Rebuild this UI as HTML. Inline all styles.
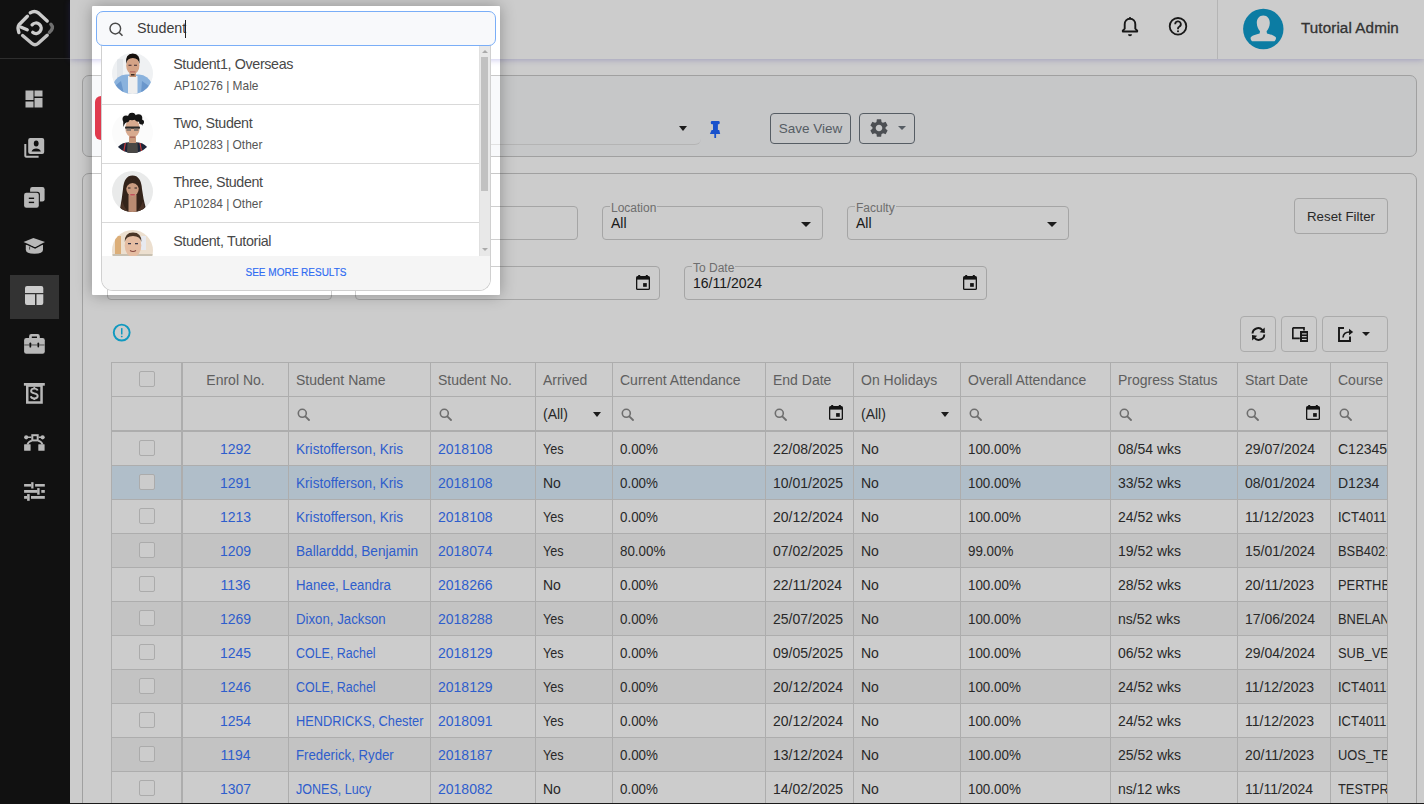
<!DOCTYPE html>
<html><head><meta charset="utf-8">
<style>
*{box-sizing:border-box;margin:0;padding:0}
html,body{width:1424px;height:804px;overflow:hidden;background:#fff;font-family:"Liberation Sans",sans-serif;color:#333}
.abs{position:absolute}
#side{position:absolute;left:0;top:0;width:70px;height:804px;background:#161616}
#side .dv{position:absolute;left:0;top:58px;width:70px;height:1px;background:#3a3a3a}
#side .ic{position:absolute;left:22px;width:24px;height:24px}
#side .act{position:absolute;left:10px;top:275px;width:49px;height:44px;background:#404040}
#hdr{position:absolute;left:70px;top:0;width:1354px;height:59px;background:#fff;box-shadow:0 1px 6px rgba(70,60,190,.28)}
#hdr .vd{position:absolute;left:1147px;top:0;width:1px;height:59px;background:#e3e3e3}
.card{position:absolute;left:82px;width:1335px;border:1px solid #c9c9c9;border-radius:7px;background:#fff}
.btn{position:absolute;border:1px solid #6c757d;border-radius:4px;color:#6c757d;font-size:13.5px;display:flex;align-items:center;justify-content:center}
.inp{position:absolute;border:1px solid #cfcfcf;border-radius:4px;height:34px}
.inp .lg{position:absolute;left:7px;top:-6px;font-size:12px;color:#8a8a8a;background:#fff;padding:0 1px;line-height:14px}
.inp .vl{position:absolute;left:8px;top:8px;font-size:14px;color:#222}
.caret{position:absolute;width:0;height:0;border-left:5px solid transparent;border-right:5px solid transparent;border-top:5px solid #222}
.tbtn{position:absolute;top:316px;height:36px;border:1px solid #d6d6d6;border-radius:4px;background:#fff}
#tbl{position:absolute;left:111px;top:362px;width:1277px;height:442px;border-left:1px solid #d9d9d9;border-top:1px solid #d9d9d9;overflow:hidden;background:#fff}
.c{position:absolute;border-right:1px solid #d9d9d9;border-bottom:1px solid #d9d9d9;padding:0 7px;display:flex;align-items:center;white-space:nowrap;overflow:hidden;font-size:14px;color:#333}
.c.hd{color:#777}
.c.ctr{justify-content:center}
.c.c0{border-right:2px solid #d9d9d9}
.c.lnk{color:#3a76ff}
.c.fl{border-bottom:2px solid #d9d9d9}
.c.alt{background:#f4f4f4}
.c.sel{background:#ddeefc}
.cb{position:absolute;left:27px;top:8px;width:16px;height:16px;border:1px solid #d6d6d6;border-radius:2px;background:#fff}
.c .mag{position:absolute;left:8px;top:11px}
.c .cal{position:absolute;right:10px;top:8px}
.c .all{position:absolute;left:7px;top:9px}
.c .caret{right:11px;top:15px;border-width:5px 4.5px 0 4.5px}
#cut{position:absolute;left:92px;top:6px;width:408px;height:289px;border-radius:1px;box-shadow:0 0 16px rgba(0,0,0,.3),0 0 0 3000px rgba(0,0,0,.2);z-index:10}
#pop{position:absolute;left:0;top:0;z-index:11}
#srch{position:absolute;left:96px;top:11px;width:400px;height:35px;border:1.3px solid #7aaef7;border-radius:7px;background:#f8f9fb;z-index:2}
#srch .tx{position:absolute;left:40px;top:8px;font-size:14.3px;color:#3c3c3c;line-height:17px}
#srch .cur{position:absolute;left:88px;top:8px;width:1px;height:18px;background:#222}
#list{position:absolute;left:101px;top:45px;width:390px;height:246px;border:1px solid #d0d0d0;border-top:none;border-radius:0 0 12px 12px;background:#fff;overflow:hidden}
.it{position:absolute;left:0;width:377px;height:59px;border-bottom:1px solid #d9d9d9}
.it .nm{position:absolute;left:71.2px;top:9.8px;font-size:14.3px;letter-spacing:-0.36px;color:#484848;line-height:16px}
.it .sb{position:absolute;left:72px;top:33.3px;font-size:11.9px;color:#555;line-height:14px}
.it .av{position:absolute;left:10px;top:7px;width:41px;height:41px;border-radius:50%;overflow:hidden}
#sbar{position:absolute;left:377px;top:0;width:11px;height:211px;background:#e8e8e8;border-left:1px solid #e0e0e0}
#thumb{position:absolute;left:1px;top:12px;width:7px;height:134px;background:#c1c1c1}
#foot{position:absolute;left:0;top:211px;width:388px;height:34px;background:#f5f5f5;font-size:10px;color:#2f6cf2;text-align:center;line-height:33px;-webkit-text-stroke:.15px #2f6cf2}
</style></head><body>

<div id="side">
 <svg class="abs" style="left:0;top:0" width="70" height="58" viewBox="0 0 70 58">
  <g fill="none" stroke="#ffffff" stroke-width="3.4" stroke-linecap="round" stroke-linejoin="round">
   <path d="M30.3 12.8 Q34.5 10.2 38.5 13 L47.2 21"/>
   <path d="M27.4 16.3 L19 24.8 Q17.2 27 18.9 32.6"/>
   <path d="M21.2 27.2 L27.2 29.8"/>
   <path d="M32.1 24.8 A5.2 5.2 0 1 1 32.8 32.4"/>
   <path d="M22.6 35.5 L32 43.5 Q35 46 38 43.5 L47.2 35.2" stroke="#f4f4f4"/>
  </g>
  <path d="M50.9 24.3 Q54.5 28 49.5 32.3" stroke="#8c8c8c" stroke-width="3.4" fill="none" stroke-linecap="round"/>
 </svg>
 <div class="dv"></div>
 <div class="act"></div>
 <!-- dashboard -->
 <svg class="ic" style="top:87px" viewBox="0 0 24 24"><path fill="#e6e6e6" d="M3.5 13h8V3.5h-8zM3.5 20.5h8V14.5h-8zM12.5 20.5h8V11h-8zM12.5 3.5v6h8v-6z"/></svg>
 <!-- contacts -->
 <svg class="ic" style="top:136px" viewBox="0 0 24 24"><path fill="#e6e6e6" d="M4.3 8H2.3v11.8c0 1.1.9 2 2 2h12.3v-2H4.3z"/><rect x="6.2" y="2" width="16" height="16" rx="2" fill="#e6e6e6"/><ellipse cx="14.2" cy="7.5" rx="2.4" ry="2.9" fill="#161616"/><path d="M9.6 15.6c.4-2 2.4-3.2 4.6-3.2s4.2 1.2 4.6 3.2z" fill="#161616"/></svg>
 <!-- copies -->
 <svg class="ic" style="top:185px" viewBox="0 0 24 24"><rect x="8.1" y="2" width="14.5" height="14.4" rx="2.2" fill="#e6e6e6"/><rect x="1" y="6.7" width="16.9" height="17" rx="2.6" fill="#161616"/><rect x="2.1" y="7.8" width="14.7" height="14.9" rx="2.2" fill="#e6e6e6"/><rect x="6.8" y="12.6" width="5.3" height="1.4" fill="#161616"/><rect x="6.8" y="16.7" width="5.3" height="1.4" fill="#161616"/></svg>
 <!-- school -->
 <svg class="ic" style="top:234px" viewBox="0 0 24 24"><path d="M3.8 10.8V15.8Q3.8 19.8 12.5 19.8Q21 19.8 21 15.8V10.8z" fill="#e6e6e6"/><path d="M1.6 8.6L13.1 13.9L23 8.6" fill="none" stroke="#161616" stroke-width="1.3"/><path d="M1.5 8L11.4 3.9L23 8L13.1 12.9z" fill="#e6e6e6"/><rect x="7" y="12.5" width="1.1" height="3.1" fill="#6a6a6a"/></svg>
 <!-- layout active -->
 <svg class="ic" style="top:284px" viewBox="0 0 24 24"><path fill="#ffffff" d="M5 2h14.3a2 2 0 0 1 2 2v5H3V4a2 2 0 0 1 2-2zM3 10.3h10V21H5a2 2 0 0 1-2-2zM14.5 10.3H21.3V19a2 2 0 0 1-2 2h-4.8z"/></svg>
 <!-- briefcase -->
 <svg class="ic" style="top:332px" viewBox="0 0 24 24"><path d="M9.3 2h6.3a2.2 2.2 0 0 1 2.2 2.2V7H15V4.6H9.8V7H7.1V4.2A2.2 2.2 0 0 1 9.3 2z" fill="#e6e6e6"/><rect x="2.1" y="6.1" width="20.7" height="15.7" rx="2.2" fill="#e6e6e6"/><rect x="2.1" y="12.1" width="20.7" height="1.7" fill="#9a9a9a"/><rect x="7.5" y="10.4" width="1.7" height="5.1" rx=".85" fill="#161616"/><rect x="15.5" y="10.4" width="1.6" height="5.1" rx=".8" fill="#161616"/></svg>
 <!-- dollar doc -->
 <svg class="ic" style="top:381px" viewBox="0 0 24 24"><rect x="1.9" y="2" width="20.9" height="2.7" fill="#e6e6e6"/><rect x="5.25" y="4.6" width="14.3" height="16.9" fill="none" stroke="#e6e6e6" stroke-width="2.5"/><path d="M15.6 9.4C15.3 8.2 14 7.6 12.3 7.6C10.3 7.6 9.1 8.6 9.1 10C9.1 11.5 10.5 12 12.3 12.4C14.3 12.8 15.7 13.4 15.7 15C15.7 16.5 14.3 17.4 12.3 17.4C10.4 17.4 9.1 16.7 8.8 15.3M12.3 6V7.6M12.3 17.4V19" fill="none" stroke="#e6e6e6" stroke-width="1.9"/></svg>
 <!-- network -->
 <svg class="ic" style="top:430px" viewBox="0 0 24 24"><g fill="#e6e6e6"><circle cx="4.2" cy="7.3" r="2.1"/><circle cx="20.6" cy="7.3" r="2.1"/><rect x="2.1" y="14.2" width="6.5" height="6.5" rx=".5"/><rect x="16.3" y="14.2" width="6.3" height="6.5" rx=".5"/></g><g fill="none" stroke="#e6e6e6"><rect x="10.3" y="5.2" width="5.4" height="5.2" stroke-width="2"/><path d="M4.2 7.3H9.3M16.7 7.3H20.6" stroke-width="1.5"/><path d="M9.8 10.6Q6.3 11.6 5.4 14.5M16.2 10.6Q19.7 11.6 20.5 14.5" stroke-width="1.8"/></g></svg>
 <!-- tune -->
 <svg class="ic" style="top:479px" viewBox="0 0 24 24"><g fill="#e6e6e6"><rect x="2.1" y="5" width="7.1" height="2.6"/><rect x="9.2" y="3.2" width="2.3" height="6.3"/><rect x="13.1" y="5" width="9.7" height="2.6"/><rect x="2.1" y="11" width="13.4" height="2.8"/><rect x="15.2" y="9.1" width="2.4" height="6.6"/><rect x="19.3" y="11" width="3.5" height="2.8"/><rect x="2.1" y="17" width="3" height="2.8"/><rect x="5.1" y="15.1" width="2.6" height="6.7"/><rect x="9" y="17" width="13.8" height="2.8"/></g></svg>
</div>

<div id="hdr">
 <svg class="abs" style="left:1050px;top:16px" width="20" height="21" viewBox="0 0 20 21"><path d="M10 2.7c-3.2 0-5.3 2.4-5.3 5.6v4.4L2.8 14.6v.9h14.4v-.9l-1.9-1.9V8.3c0-3.2-2.1-5.6-5.3-5.6z" fill="none" stroke="#1e1e1e" stroke-width="1.9" stroke-linejoin="round"/><path d="M8 18.3a2 2 0 0 0 4 0" fill="#1e1e1e"/><rect x="9.2" y="1" width="1.6" height="2" fill="#1e1e1e"/></svg>
 <svg class="abs" style="left:1097.5px;top:17px" width="20" height="20" viewBox="0 0 20 20"><circle cx="10" cy="9.3" r="8.3" fill="none" stroke="#1e1e1e" stroke-width="1.8"/><path d="M7.2 7.2a2.8 2.8 0 1 1 4 2.5c-.8.4-1.2.9-1.2 1.8v.7" fill="none" stroke="#1e1e1e" stroke-width="1.8"/><circle cx="10" cy="14.3" r="1" fill="#1e1e1e"/></svg>
 <div class="vd"></div>
 <svg class="abs" style="left:1173px;top:8px" width="41" height="42" viewBox="0 0 41 42"><circle cx="20.3" cy="21" r="20.2" fill="#109bcc"/><path d="M20.3 7.5C16.2 7.5 13.8 10.8 13.8 15C13.8 18.5 15.5 21.6 17 23.3L16.6 25.5C13 26.3 9.8 27.3 8 29C7.2 30 7.6 32 9 33.3L31.5 33.3C33 32 33.4 30 32.6 29C30.8 27.3 27.6 26.3 24 25.5L23.6 23.3C25.1 21.6 26.8 18.5 26.8 15C26.8 10.8 24.4 7.5 20.3 7.5z" fill="#fff"/></svg>
 <div class="abs" style="left:1231px;top:19px;font-size:15.2px;color:#404040;-webkit-text-stroke:.3px #404040;letter-spacing:0.1px">Tutorial Admin</div>
</div>

<!-- card 1 -->
<div class="card" style="top:75px;height:82px;background:#f8f9fb"></div>
<div class="abs" style="left:95px;top:96px;width:60px;height:44px;border-radius:6px;background:#e03a4e"></div>
<div class="abs" style="left:160px;top:110px;width:541px;height:35px;border-bottom:1px solid #e2e2e2;border-radius:0 0 6px 0"></div>
<span class="caret" style="left:679px;top:126px;border-width:5px 4px 0 4px"></span>
<svg class="abs" style="left:708px;top:120px" width="14" height="18" viewBox="0 0 14 18"><g fill="#1f66ff"><rect x="2.8" y="1" width="8.9" height="3.3" rx="1.2"/><rect x="5" y="4" width="4.9" height="6.3"/><path d="M3.6 10.1H11.2L12.2 13.9H1.9z"/><rect x="6.3" y="13.5" width="1.8" height="4.5" rx=".6"/></g></svg>
<div class="btn" style="left:770px;top:113px;width:81px;height:31px">Save View</div>
<div class="btn" style="left:859px;top:113px;width:56px;height:31px">
 <svg class="abs" style="left:7.5px;top:3px" width="22" height="22" viewBox="0 0 24 24"><path fill="#5f6368" d="M19.14 12.94c.04-.3.06-.61.06-.94 0-.32-.02-.64-.07-.94l2.03-1.58a.49.49 0 0 0 .12-.61l-1.92-3.32a.49.49 0 0 0-.59-.22l-2.39.96c-.5-.38-1.03-.7-1.62-.94l-.36-2.54a.48.48 0 0 0-.48-.41h-3.84c-.24 0-.43.17-.47.41l-.36 2.54c-.59.24-1.13.57-1.62.94l-2.39-.96a.48.48 0 0 0-.59.22L2.74 8.87c-.12.21-.08.47.12.61l2.03 1.58c-.05.3-.09.63-.09.94s.02.64.07.94l-2.03 1.58a.49.49 0 0 0-.12.61l1.92 3.32c.12.22.37.29.59.22l2.39-.96c.5.38 1.03.7 1.62.94l.36 2.54c.05.24.24.41.48.41h3.84c.24 0 .44-.17.47-.41l.36-2.54c.59-.24 1.13-.56 1.62-.94l2.39.96c.22.08.47 0 .59-.22l1.92-3.32c.12-.22.07-.47-.12-.61l-2.01-1.58zM12 15.6c-1.98 0-3.6-1.62-3.6-3.6s1.62-3.6 3.6-3.6 3.6 1.62 3.6 3.6-1.62 3.6-3.6 3.6z"/></svg>
 <span class="caret" style="left:38px;top:11.5px;border-width:4px 4px 0 4px;border-top-color:#6c757d"></span>
</div>

<!-- card 2 -->
<div class="card" style="top:173px;height:700px"></div>
<div class="inp" style="left:354px;top:206px;width:224px"></div>
<div class="inp" style="left:602px;top:206px;width:221px"><span class="lg">Location</span><span class="vl">All</span><span class="caret" style="left:198px;top:15px;border-width:5px 5px 0 5px"></span></div>
<div class="inp" style="left:847px;top:206px;width:222px"><span class="lg">Faculty</span><span class="vl">All</span><span class="caret" style="left:199px;top:15px;border-width:5px 5px 0 5px"></span></div>
<div class="btn" style="left:1294px;top:198px;width:94px;height:36px;border-color:#cfcfcf;color:#333;font-size:13.3px">Reset Filter</div>
<div class="inp" style="left:107px;top:266px;width:225px"></div>
<div class="inp" style="left:355px;top:266px;width:305px"><svg class="abs" style="left:280px;top:8px" width="14" height="15" viewBox="0 0 14 15"><rect x="0" y="1" width="14" height="14" rx="1.6" fill="#1a1a1a"/><rect x="1.3" y="4.6" width="11.4" height="9.1" fill="#fff"/><rect x="7.1" y="8.1" width="3.7" height="3.7" fill="#1a1a1a"/><rect x="2.2" y="0" width="2" height="2" fill="#1a1a1a"/><rect x="9.8" y="0" width="2" height="2" fill="#1a1a1a"/></svg></div>
<div class="inp" style="left:684px;top:266px;width:303px"><span class="lg">To Date</span><span class="vl">16/11/2024</span><svg class="abs" style="left:278px;top:8px" width="14" height="15" viewBox="0 0 14 15"><rect x="0" y="1" width="14" height="14" rx="1.6" fill="#1a1a1a"/><rect x="1.3" y="4.6" width="11.4" height="9.1" fill="#fff"/><rect x="7.1" y="8.1" width="3.7" height="3.7" fill="#1a1a1a"/><rect x="2.2" y="0" width="2" height="2" fill="#1a1a1a"/><rect x="9.8" y="0" width="2" height="2" fill="#1a1a1a"/></svg></div>
<svg class="abs" style="left:112px;top:323px" width="19" height="19" viewBox="0 0 19 19"><circle cx="9.7" cy="9.6" r="7.95" fill="none" stroke="#14c0f0" stroke-width="1.9"/><rect x="9" y="5" width="1.5" height="6.6" rx=".6" fill="#14c0f0"/><rect x="8.9" y="12.7" width="1.7" height="1.6" rx=".6" fill="#14c0f0"/></svg>
<div class="tbtn" style="left:1240px;width:36px"><svg class="abs" style="left:10px;top:10px" width="15" height="14" viewBox="0 0 16 15"><g fill="none" stroke="#1e1e1e" stroke-width="2.1"><path d="M1.6 7 A6 6 0 0 1 12.2 3.4"/><path d="M14.2 8 A6 6 0 0 1 3.6 11.6"/></g><path d="M14.6 0.6 L14.8 6.4 L9.2 5.6z" fill="#1e1e1e"/><path d="M1.2 14.4 L1 8.6 L6.6 9.4z" fill="#1e1e1e"/></svg></div>
<div class="tbtn" style="left:1281px;width:36px"><svg class="abs" style="left:9.5px;top:10px" width="17" height="16" viewBox="0 0 17 16"><path d="M0.8 0.8h11.2v2.6M0.8 0.8v10.6h7" fill="none" stroke="#1e1e1e" stroke-width="1.7"/><rect x="8" y="4" width="8" height="11" fill="#1e1e1e"/><rect x="10" y="6.3" width="4.6" height="1.1" fill="#fff"/><rect x="10" y="9.1" width="4.6" height="1.1" fill="#fff"/><rect x="10" y="11.9" width="4.6" height="1.1" fill="#fff"/></svg></div>
<div class="tbtn" style="left:1322px;width:66px"><svg class="abs" style="left:15px;top:9.5px" width="17" height="15" viewBox="0 0 17 15"><path d="M6 1H1v13h11V9.5" fill="none" stroke="#1e1e1e" stroke-width="1.9"/><path d="M5 10.5C5.3 6.5 7.5 5 11.5 5" fill="none" stroke="#1e1e1e" stroke-width="1.6"/><path d="M11 1.8 L15.2 5 L11 8.2z" fill="#1e1e1e"/></svg><span class="caret" style="left:38.5px;top:15px;border-width:4px 4px 0 4px"></span></div>

<div id="tbl">
<div class="c hd c0" style="left:0px;top:0px;width:71px;height:34px;"><span class="cb" style="top:8px"></span></div>
<div class="c hd ctr" style="left:71px;top:0px;width:106px;height:34px;">Enrol No.</div>
<div class="c hd" style="left:177px;top:0px;width:142px;height:34px;">Student Name</div>
<div class="c hd" style="left:319px;top:0px;width:105px;height:34px;">Student No.</div>
<div class="c hd" style="left:424px;top:0px;width:77px;height:34px;">Arrived</div>
<div class="c hd" style="left:501px;top:0px;width:153px;height:34px;">Current Attendance</div>
<div class="c hd" style="left:654px;top:0px;width:88px;height:34px;">End Date</div>
<div class="c hd" style="left:742px;top:0px;width:107px;height:34px;">On Holidays</div>
<div class="c hd" style="left:849px;top:0px;width:150px;height:34px;">Overall Attendance</div>
<div class="c hd" style="left:999px;top:0px;width:127px;height:34px;">Progress Status</div>
<div class="c hd" style="left:1126px;top:0px;width:93px;height:34px;">Start Date</div>
<div class="c hd" style="left:1219px;top:0px;width:57px;height:34px;">Course Code</div>
<div class="c fl c0" style="left:0px;top:34px;width:71px;height:35px;"></div>
<div class="c fl" style="left:71px;top:34px;width:106px;height:35px;"></div>
<div class="c fl" style="left:177px;top:34px;width:142px;height:35px;"><svg class="mag" width="13" height="13" viewBox="0 0 13 13"><circle cx="5.3" cy="5.3" r="4" fill="none" stroke="#8a8a8a" stroke-width="1.6"/><path d="M8.3 8.3L12 12" stroke="#8a8a8a" stroke-width="1.8" stroke-linecap="round"/></svg></div>
<div class="c fl" style="left:319px;top:34px;width:105px;height:35px;"><svg class="mag" width="13" height="13" viewBox="0 0 13 13"><circle cx="5.3" cy="5.3" r="4" fill="none" stroke="#8a8a8a" stroke-width="1.6"/><path d="M8.3 8.3L12 12" stroke="#8a8a8a" stroke-width="1.8" stroke-linecap="round"/></svg></div>
<div class="c fl" style="left:424px;top:34px;width:77px;height:35px;"><span class="all">(All)</span><span class="caret"></span></div>
<div class="c fl" style="left:501px;top:34px;width:153px;height:35px;"><svg class="mag" width="13" height="13" viewBox="0 0 13 13"><circle cx="5.3" cy="5.3" r="4" fill="none" stroke="#8a8a8a" stroke-width="1.6"/><path d="M8.3 8.3L12 12" stroke="#8a8a8a" stroke-width="1.8" stroke-linecap="round"/></svg></div>
<div class="c fl" style="left:654px;top:34px;width:88px;height:35px;"><svg class="mag" width="13" height="13" viewBox="0 0 13 13"><circle cx="5.3" cy="5.3" r="4" fill="none" stroke="#8a8a8a" stroke-width="1.6"/><path d="M8.3 8.3L12 12" stroke="#8a8a8a" stroke-width="1.8" stroke-linecap="round"/></svg><svg class="cal" width="14" height="15" viewBox="0 0 14 15"><rect x="0" y="1" width="14" height="14" rx="1.6" fill="#1a1a1a"/><rect x="1.3" y="4.6" width="11.4" height="9.1" fill="#fff"/><rect x="7.1" y="8.1" width="3.7" height="3.7" fill="#1a1a1a"/><rect x="2.2" y="0" width="2" height="2" fill="#1a1a1a"/><rect x="9.8" y="0" width="2" height="2" fill="#1a1a1a"/></svg></div>
<div class="c fl" style="left:742px;top:34px;width:107px;height:35px;"><span class="all">(All)</span><span class="caret"></span></div>
<div class="c fl" style="left:849px;top:34px;width:150px;height:35px;"><svg class="mag" width="13" height="13" viewBox="0 0 13 13"><circle cx="5.3" cy="5.3" r="4" fill="none" stroke="#8a8a8a" stroke-width="1.6"/><path d="M8.3 8.3L12 12" stroke="#8a8a8a" stroke-width="1.8" stroke-linecap="round"/></svg></div>
<div class="c fl" style="left:999px;top:34px;width:127px;height:35px;"><svg class="mag" width="13" height="13" viewBox="0 0 13 13"><circle cx="5.3" cy="5.3" r="4" fill="none" stroke="#8a8a8a" stroke-width="1.6"/><path d="M8.3 8.3L12 12" stroke="#8a8a8a" stroke-width="1.8" stroke-linecap="round"/></svg></div>
<div class="c fl" style="left:1126px;top:34px;width:93px;height:35px;"><svg class="mag" width="13" height="13" viewBox="0 0 13 13"><circle cx="5.3" cy="5.3" r="4" fill="none" stroke="#8a8a8a" stroke-width="1.6"/><path d="M8.3 8.3L12 12" stroke="#8a8a8a" stroke-width="1.8" stroke-linecap="round"/></svg><svg class="cal" width="14" height="15" viewBox="0 0 14 15"><rect x="0" y="1" width="14" height="14" rx="1.6" fill="#1a1a1a"/><rect x="1.3" y="4.6" width="11.4" height="9.1" fill="#fff"/><rect x="7.1" y="8.1" width="3.7" height="3.7" fill="#1a1a1a"/><rect x="2.2" y="0" width="2" height="2" fill="#1a1a1a"/><rect x="9.8" y="0" width="2" height="2" fill="#1a1a1a"/></svg></div>
<div class="c fl" style="left:1219px;top:34px;width:57px;height:35px;"><svg class="mag" width="13" height="13" viewBox="0 0 13 13"><circle cx="5.3" cy="5.3" r="4" fill="none" stroke="#8a8a8a" stroke-width="1.6"/><path d="M8.3 8.3L12 12" stroke="#8a8a8a" stroke-width="1.8" stroke-linecap="round"/></svg></div>
<div class="c dr c0" style="left:0px;top:69px;width:71px;height:34px;"><span class="cb"></span></div>
<div class="c dr ctr lnk" style="left:71px;top:69px;width:106px;height:34px;">1292</div>
<div class="c dr lnk" style="left:177px;top:69px;width:142px;height:34px;"><span style="display:inline-block;transform:scaleX(0.972);transform-origin:left center">Kristofferson, Kris</span></div>
<div class="c dr lnk" style="left:319px;top:69px;width:105px;height:34px;">2018108</div>
<div class="c dr" style="left:424px;top:69px;width:77px;height:34px;"><span style="display:inline-block;transform:scaleX(0.900);transform-origin:left center">Yes</span></div>
<div class="c dr" style="left:501px;top:69px;width:153px;height:34px;"><span style="display:inline-block;transform:scaleX(0.955);transform-origin:left center">0.00%</span></div>
<div class="c dr" style="left:654px;top:69px;width:88px;height:34px;">22/08/2025</div>
<div class="c dr" style="left:742px;top:69px;width:107px;height:34px;">No</div>
<div class="c dr" style="left:849px;top:69px;width:150px;height:34px;"><span style="display:inline-block;transform:scaleX(0.955);transform-origin:left center">100.00%</span></div>
<div class="c dr" style="left:999px;top:69px;width:127px;height:34px;">08/54 wks</div>
<div class="c dr" style="left:1126px;top:69px;width:93px;height:34px;">29/07/2024</div>
<div class="c dr" style="left:1219px;top:69px;width:57px;height:34px;">C123456</div>
<div class="c dr sel c0" style="left:0px;top:103px;width:71px;height:34px;"><span class="cb"></span></div>
<div class="c dr sel ctr lnk" style="left:71px;top:103px;width:106px;height:34px;">1291</div>
<div class="c dr sel lnk" style="left:177px;top:103px;width:142px;height:34px;"><span style="display:inline-block;transform:scaleX(0.972);transform-origin:left center">Kristofferson, Kris</span></div>
<div class="c dr sel lnk" style="left:319px;top:103px;width:105px;height:34px;">2018108</div>
<div class="c dr sel" style="left:424px;top:103px;width:77px;height:34px;">No</div>
<div class="c dr sel" style="left:501px;top:103px;width:153px;height:34px;"><span style="display:inline-block;transform:scaleX(0.955);transform-origin:left center">0.00%</span></div>
<div class="c dr sel" style="left:654px;top:103px;width:88px;height:34px;">10/01/2025</div>
<div class="c dr sel" style="left:742px;top:103px;width:107px;height:34px;">No</div>
<div class="c dr sel" style="left:849px;top:103px;width:150px;height:34px;"><span style="display:inline-block;transform:scaleX(0.955);transform-origin:left center">100.00%</span></div>
<div class="c dr sel" style="left:999px;top:103px;width:127px;height:34px;">33/52 wks</div>
<div class="c dr sel" style="left:1126px;top:103px;width:93px;height:34px;">08/01/2024</div>
<div class="c dr sel" style="left:1219px;top:103px;width:57px;height:34px;">D1234</div>
<div class="c dr c0" style="left:0px;top:137px;width:71px;height:34px;"><span class="cb"></span></div>
<div class="c dr ctr lnk" style="left:71px;top:137px;width:106px;height:34px;">1213</div>
<div class="c dr lnk" style="left:177px;top:137px;width:142px;height:34px;"><span style="display:inline-block;transform:scaleX(0.972);transform-origin:left center">Kristofferson, Kris</span></div>
<div class="c dr lnk" style="left:319px;top:137px;width:105px;height:34px;">2018108</div>
<div class="c dr" style="left:424px;top:137px;width:77px;height:34px;"><span style="display:inline-block;transform:scaleX(0.900);transform-origin:left center">Yes</span></div>
<div class="c dr" style="left:501px;top:137px;width:153px;height:34px;"><span style="display:inline-block;transform:scaleX(0.955);transform-origin:left center">0.00%</span></div>
<div class="c dr" style="left:654px;top:137px;width:88px;height:34px;">20/12/2024</div>
<div class="c dr" style="left:742px;top:137px;width:107px;height:34px;">No</div>
<div class="c dr" style="left:849px;top:137px;width:150px;height:34px;"><span style="display:inline-block;transform:scaleX(0.955);transform-origin:left center">100.00%</span></div>
<div class="c dr" style="left:999px;top:137px;width:127px;height:34px;">24/52 wks</div>
<div class="c dr" style="left:1126px;top:137px;width:93px;height:34px;">11/12/2023</div>
<div class="c dr" style="left:1219px;top:137px;width:57px;height:34px;"><span style="display:inline-block;transform:scaleX(0.920);transform-origin:left center">ICT40115</span></div>
<div class="c dr alt c0" style="left:0px;top:171px;width:71px;height:34px;"><span class="cb"></span></div>
<div class="c dr alt ctr lnk" style="left:71px;top:171px;width:106px;height:34px;">1209</div>
<div class="c dr alt lnk" style="left:177px;top:171px;width:142px;height:34px;"><span style="display:inline-block;transform:scaleX(0.975);transform-origin:left center">Ballarddd, Benjamin</span></div>
<div class="c dr alt lnk" style="left:319px;top:171px;width:105px;height:34px;">2018074</div>
<div class="c dr alt" style="left:424px;top:171px;width:77px;height:34px;"><span style="display:inline-block;transform:scaleX(0.900);transform-origin:left center">Yes</span></div>
<div class="c dr alt" style="left:501px;top:171px;width:153px;height:34px;"><span style="display:inline-block;transform:scaleX(0.955);transform-origin:left center">80.00%</span></div>
<div class="c dr alt" style="left:654px;top:171px;width:88px;height:34px;">07/02/2025</div>
<div class="c dr alt" style="left:742px;top:171px;width:107px;height:34px;">No</div>
<div class="c dr alt" style="left:849px;top:171px;width:150px;height:34px;"><span style="display:inline-block;transform:scaleX(0.955);transform-origin:left center">99.00%</span></div>
<div class="c dr alt" style="left:999px;top:171px;width:127px;height:34px;">19/52 wks</div>
<div class="c dr alt" style="left:1126px;top:171px;width:93px;height:34px;">15/01/2024</div>
<div class="c dr alt" style="left:1219px;top:171px;width:57px;height:34px;"><span style="display:inline-block;transform:scaleX(0.920);transform-origin:left center">BSB40215</span></div>
<div class="c dr c0" style="left:0px;top:205px;width:71px;height:34px;"><span class="cb"></span></div>
<div class="c dr ctr lnk" style="left:71px;top:205px;width:106px;height:34px;">1136</div>
<div class="c dr lnk" style="left:177px;top:205px;width:142px;height:34px;"><span style="display:inline-block;transform:scaleX(0.945);transform-origin:left center">Hanee, Leandra</span></div>
<div class="c dr lnk" style="left:319px;top:205px;width:105px;height:34px;">2018266</div>
<div class="c dr" style="left:424px;top:205px;width:77px;height:34px;">No</div>
<div class="c dr" style="left:501px;top:205px;width:153px;height:34px;"><span style="display:inline-block;transform:scaleX(0.955);transform-origin:left center">0.00%</span></div>
<div class="c dr" style="left:654px;top:205px;width:88px;height:34px;">22/11/2024</div>
<div class="c dr" style="left:742px;top:205px;width:107px;height:34px;">No</div>
<div class="c dr" style="left:849px;top:205px;width:150px;height:34px;"><span style="display:inline-block;transform:scaleX(0.955);transform-origin:left center">100.00%</span></div>
<div class="c dr" style="left:999px;top:205px;width:127px;height:34px;">28/52 wks</div>
<div class="c dr" style="left:1126px;top:205px;width:93px;height:34px;">20/11/2023</div>
<div class="c dr" style="left:1219px;top:205px;width:57px;height:34px;"><span style="display:inline-block;transform:scaleX(0.920);transform-origin:left center">PERTHBC</span></div>
<div class="c dr alt c0" style="left:0px;top:239px;width:71px;height:34px;"><span class="cb"></span></div>
<div class="c dr alt ctr lnk" style="left:71px;top:239px;width:106px;height:34px;">1269</div>
<div class="c dr alt lnk" style="left:177px;top:239px;width:142px;height:34px;"><span style="display:inline-block;transform:scaleX(0.945);transform-origin:left center">Dixon, Jackson</span></div>
<div class="c dr alt lnk" style="left:319px;top:239px;width:105px;height:34px;">2018288</div>
<div class="c dr alt" style="left:424px;top:239px;width:77px;height:34px;"><span style="display:inline-block;transform:scaleX(0.900);transform-origin:left center">Yes</span></div>
<div class="c dr alt" style="left:501px;top:239px;width:153px;height:34px;"><span style="display:inline-block;transform:scaleX(0.955);transform-origin:left center">0.00%</span></div>
<div class="c dr alt" style="left:654px;top:239px;width:88px;height:34px;">25/07/2025</div>
<div class="c dr alt" style="left:742px;top:239px;width:107px;height:34px;">No</div>
<div class="c dr alt" style="left:849px;top:239px;width:150px;height:34px;"><span style="display:inline-block;transform:scaleX(0.955);transform-origin:left center">100.00%</span></div>
<div class="c dr alt" style="left:999px;top:239px;width:127px;height:34px;">ns/52 wks</div>
<div class="c dr alt" style="left:1126px;top:239px;width:93px;height:34px;">17/06/2024</div>
<div class="c dr alt" style="left:1219px;top:239px;width:57px;height:34px;"><span style="display:inline-block;transform:scaleX(0.920);transform-origin:left center">BNELANG</span></div>
<div class="c dr c0" style="left:0px;top:273px;width:71px;height:34px;"><span class="cb"></span></div>
<div class="c dr ctr lnk" style="left:71px;top:273px;width:106px;height:34px;">1245</div>
<div class="c dr lnk" style="left:177px;top:273px;width:142px;height:34px;"><span style="display:inline-block;transform:scaleX(0.890);transform-origin:left center">COLE, Rachel</span></div>
<div class="c dr lnk" style="left:319px;top:273px;width:105px;height:34px;">2018129</div>
<div class="c dr" style="left:424px;top:273px;width:77px;height:34px;"><span style="display:inline-block;transform:scaleX(0.900);transform-origin:left center">Yes</span></div>
<div class="c dr" style="left:501px;top:273px;width:153px;height:34px;"><span style="display:inline-block;transform:scaleX(0.955);transform-origin:left center">0.00%</span></div>
<div class="c dr" style="left:654px;top:273px;width:88px;height:34px;">09/05/2025</div>
<div class="c dr" style="left:742px;top:273px;width:107px;height:34px;">No</div>
<div class="c dr" style="left:849px;top:273px;width:150px;height:34px;"><span style="display:inline-block;transform:scaleX(0.955);transform-origin:left center">100.00%</span></div>
<div class="c dr" style="left:999px;top:273px;width:127px;height:34px;">06/52 wks</div>
<div class="c dr" style="left:1126px;top:273px;width:93px;height:34px;">29/04/2024</div>
<div class="c dr" style="left:1219px;top:273px;width:57px;height:34px;"><span style="display:inline-block;transform:scaleX(0.920);transform-origin:left center">SUB_VET</span></div>
<div class="c dr alt c0" style="left:0px;top:307px;width:71px;height:34px;"><span class="cb"></span></div>
<div class="c dr alt ctr lnk" style="left:71px;top:307px;width:106px;height:34px;">1246</div>
<div class="c dr alt lnk" style="left:177px;top:307px;width:142px;height:34px;"><span style="display:inline-block;transform:scaleX(0.890);transform-origin:left center">COLE, Rachel</span></div>
<div class="c dr alt lnk" style="left:319px;top:307px;width:105px;height:34px;">2018129</div>
<div class="c dr alt" style="left:424px;top:307px;width:77px;height:34px;"><span style="display:inline-block;transform:scaleX(0.900);transform-origin:left center">Yes</span></div>
<div class="c dr alt" style="left:501px;top:307px;width:153px;height:34px;"><span style="display:inline-block;transform:scaleX(0.955);transform-origin:left center">0.00%</span></div>
<div class="c dr alt" style="left:654px;top:307px;width:88px;height:34px;">20/12/2024</div>
<div class="c dr alt" style="left:742px;top:307px;width:107px;height:34px;">No</div>
<div class="c dr alt" style="left:849px;top:307px;width:150px;height:34px;"><span style="display:inline-block;transform:scaleX(0.955);transform-origin:left center">100.00%</span></div>
<div class="c dr alt" style="left:999px;top:307px;width:127px;height:34px;">24/52 wks</div>
<div class="c dr alt" style="left:1126px;top:307px;width:93px;height:34px;">11/12/2023</div>
<div class="c dr alt" style="left:1219px;top:307px;width:57px;height:34px;"><span style="display:inline-block;transform:scaleX(0.920);transform-origin:left center">ICT40115</span></div>
<div class="c dr c0" style="left:0px;top:341px;width:71px;height:34px;"><span class="cb"></span></div>
<div class="c dr ctr lnk" style="left:71px;top:341px;width:106px;height:34px;">1254</div>
<div class="c dr lnk" style="left:177px;top:341px;width:142px;height:34px;"><span style="display:inline-block;transform:scaleX(0.915);transform-origin:left center">HENDRICKS, Chester</span></div>
<div class="c dr lnk" style="left:319px;top:341px;width:105px;height:34px;">2018091</div>
<div class="c dr" style="left:424px;top:341px;width:77px;height:34px;"><span style="display:inline-block;transform:scaleX(0.900);transform-origin:left center">Yes</span></div>
<div class="c dr" style="left:501px;top:341px;width:153px;height:34px;"><span style="display:inline-block;transform:scaleX(0.955);transform-origin:left center">0.00%</span></div>
<div class="c dr" style="left:654px;top:341px;width:88px;height:34px;">20/12/2024</div>
<div class="c dr" style="left:742px;top:341px;width:107px;height:34px;">No</div>
<div class="c dr" style="left:849px;top:341px;width:150px;height:34px;"><span style="display:inline-block;transform:scaleX(0.955);transform-origin:left center">100.00%</span></div>
<div class="c dr" style="left:999px;top:341px;width:127px;height:34px;">24/52 wks</div>
<div class="c dr" style="left:1126px;top:341px;width:93px;height:34px;">11/12/2023</div>
<div class="c dr" style="left:1219px;top:341px;width:57px;height:34px;"><span style="display:inline-block;transform:scaleX(0.920);transform-origin:left center">ICT40115</span></div>
<div class="c dr alt c0" style="left:0px;top:375px;width:71px;height:34px;"><span class="cb"></span></div>
<div class="c dr alt ctr lnk" style="left:71px;top:375px;width:106px;height:34px;">1194</div>
<div class="c dr alt lnk" style="left:177px;top:375px;width:142px;height:34px;"><span style="display:inline-block;transform:scaleX(0.945);transform-origin:left center">Frederick, Ryder</span></div>
<div class="c dr alt lnk" style="left:319px;top:375px;width:105px;height:34px;">2018187</div>
<div class="c dr alt" style="left:424px;top:375px;width:77px;height:34px;"><span style="display:inline-block;transform:scaleX(0.900);transform-origin:left center">Yes</span></div>
<div class="c dr alt" style="left:501px;top:375px;width:153px;height:34px;"><span style="display:inline-block;transform:scaleX(0.955);transform-origin:left center">0.00%</span></div>
<div class="c dr alt" style="left:654px;top:375px;width:88px;height:34px;">13/12/2024</div>
<div class="c dr alt" style="left:742px;top:375px;width:107px;height:34px;">No</div>
<div class="c dr alt" style="left:849px;top:375px;width:150px;height:34px;"><span style="display:inline-block;transform:scaleX(0.955);transform-origin:left center">100.00%</span></div>
<div class="c dr alt" style="left:999px;top:375px;width:127px;height:34px;">25/52 wks</div>
<div class="c dr alt" style="left:1126px;top:375px;width:93px;height:34px;">20/11/2023</div>
<div class="c dr alt" style="left:1219px;top:375px;width:57px;height:34px;"><span style="display:inline-block;transform:scaleX(0.920);transform-origin:left center">UOS_TEST</span></div>
<div class="c dr c0" style="left:0px;top:409px;width:71px;height:34px;"><span class="cb"></span></div>
<div class="c dr ctr lnk" style="left:71px;top:409px;width:106px;height:34px;">1307</div>
<div class="c dr lnk" style="left:177px;top:409px;width:142px;height:34px;"><span style="display:inline-block;transform:scaleX(0.895);transform-origin:left center">JONES, Lucy</span></div>
<div class="c dr lnk" style="left:319px;top:409px;width:105px;height:34px;">2018082</div>
<div class="c dr" style="left:424px;top:409px;width:77px;height:34px;">No</div>
<div class="c dr" style="left:501px;top:409px;width:153px;height:34px;"><span style="display:inline-block;transform:scaleX(0.955);transform-origin:left center">0.00%</span></div>
<div class="c dr" style="left:654px;top:409px;width:88px;height:34px;">14/02/2025</div>
<div class="c dr" style="left:742px;top:409px;width:107px;height:34px;">No</div>
<div class="c dr" style="left:849px;top:409px;width:150px;height:34px;"><span style="display:inline-block;transform:scaleX(0.955);transform-origin:left center">100.00%</span></div>
<div class="c dr" style="left:999px;top:409px;width:127px;height:34px;">ns/12 wks</div>
<div class="c dr" style="left:1126px;top:409px;width:93px;height:34px;">11/11/2024</div>
<div class="c dr" style="left:1219px;top:409px;width:57px;height:34px;"><span style="display:inline-block;transform:scaleX(0.920);transform-origin:left center">TESTPROG</span></div>
</div>

<div class="abs" style="left:70px;top:803px;width:1354px;height:1px;background:#1a1a1a;z-index:20"></div>

<div id="cut"></div>
<div id="pop">
 <div id="srch">
  <svg class="abs" style="left:11px;top:8px" width="17" height="17" viewBox="0 0 17 17"><circle cx="7.3" cy="8.6" r="5.3" fill="none" stroke="#4a4a4a" stroke-width="1.45"/><path d="M11 12.3l3.5 3.5" stroke="#4a4a4a" stroke-width="1.6"/></svg>
  <span class="tx">Student</span><span class="cur"></span>
 </div>
 <div id="list">
  <div class="it" style="top:1px"><svg class="av" width="41" height="41" viewBox="0 0 41 41"><rect width="41" height="41" fill="#eff1f3"/><rect x="5" y="6" width="6" height="28" fill="#e2e6ea"/><path d="M1 31 Q5 22 14 21.5 L27 21.5 Q36 22 40 31 L41 41 H0z" fill="#8ab2dd"/><path d="M3 33 L9 28 L12 41 H4z M30 28 L37 33 L36 41 H29z" fill="#6a97cc"/><path d="M16 23 H25.5 V41 H16z" fill="#efefef"/><rect x="17.5" y="17" width="6.5" height="7" fill="#c49274"/><ellipse cx="20.8" cy="12.5" rx="6.6" ry="9" fill="#d4a386"/><path d="M14 11 Q13 0.5 20.8 0.5 Q28.6 0.5 27.6 11 Q26.5 5 20.8 5 Q15.1 5 14 11z" fill="#16110e"/><path d="M18 18.2 h5.5 v1.4 h-5.5z" fill="#b46a5e"/><path d="M19 21 h3.5 v1.5 h-3.5z" fill="#3a2a22"/><path d="M16.5 11.8 h3 v1 h-3z M22 11.8 h3 v1 h-3z" fill="#3a2a30"/></svg><span class="nm">Student1, Overseas</span><span class="sb">AP10276 | Male</span></div>
  <div class="it" style="top:60px"><svg class="av" width="41" height="41" viewBox="0 0 41 41"><rect width="41" height="41" fill="#fbfbfb"/><path d="M4 38 Q7 31.5 14.5 30.5 H26.5 Q34 31.5 37 38 L39 41 H2z" fill="#1c2438"/><path d="M15.5 30.5 H25.5 L26 41 H15z" fill="#4a4846"/><path d="M13.3 31 L11.5 41 M28 31 L29.8 41" stroke="#c83a3a" stroke-width="1.2"/><rect x="17" y="24" width="7" height="7" fill="#c9987c"/><ellipse cx="20.5" cy="16" rx="7.2" ry="9.6" fill="#d8aa8f"/><path d="M11.5 15 Q9.5 3.5 20 3 Q32 2.5 30.5 14 Q29 7.8 21 7.6 Q13.5 7.8 11.5 15z" fill="#141414"/><circle cx="14" cy="7" r="3.5" fill="#141414"/><circle cx="20" cy="4.5" r="3.8" fill="#141414"/><circle cx="26.5" cy="6" r="3.8" fill="#141414"/><circle cx="29.5" cy="10" r="2.5" fill="#141414"/><rect x="13" y="14.5" width="15" height="2.2" rx="1" fill="#2a2a2a"/><rect x="14.5" y="16.5" width="4.5" height="2.5" fill="#8a7a70"/><rect x="22" y="16.5" width="4.5" height="2.5" fill="#8a7a70"/><path d="M18 24.5 h5 v1.2 h-5z" fill="#a05a50"/></svg><span class="nm">Two, Student</span><span class="sb">AP10283 | Other</span></div>
  <div class="it" style="top:119px"><svg class="av" width="41" height="41" viewBox="0 0 41 41"><rect width="41" height="41" fill="#e9eaea"/><path d="M8 38 Q10 27 11 18 Q12 4.5 20.5 4.5 Q29 4.5 30 18 Q31 27 34 38 Q27 42 20.5 42 Q14 42 8 38z" fill="#33231a"/><path d="M16.5 24 H24.5 V41 H16.5z" fill="#b98b72"/><ellipse cx="20.5" cy="17" rx="6.3" ry="8.5" fill="#c99b80"/><path d="M13 22 Q12.5 8.5 20.5 8 Q28.5 8.5 28 22 Q27 12.5 20.5 12 Q14 12.5 13 22z" fill="#33231a"/><path d="M18.3 23 h4.5 v1.4 h-4.5z" fill="#c0505a"/><path d="M16 16.5 h2.5 v1 h-2.5z M22.5 16.5 h2.5 v1 h-2.5z" fill="#2a2020"/><path d="M10 30 Q12 36 16 41 H8z M31 30 Q29 36 25 41 H33z" fill="#4a3226"/></svg><span class="nm">Three, Student</span><span class="sb">AP10284 | Other</span></div>
  <div class="it" style="top:178px"><svg class="av" width="41" height="41" viewBox="0 0 41 41"><rect width="41" height="41" fill="#ecdfcf"/><rect x="3" y="6" width="6" height="20" fill="#dcae78"/><rect x="29" y="6" width="5" height="14" fill="#e7e9ef"/><rect x="0" y="24" width="41" height="2" fill="#c9c1b2"/><path d="M10 41 L14 34 H28 L32 41z" fill="#1f2c4a"/><rect x="16" y="27" width="10" height="8" fill="#ddb296"/><ellipse cx="21" cy="15.5" rx="8.3" ry="11.5" fill="#e5bda2"/><path d="M12.7 12 Q12.5 2.5 21 2.5 Q29.5 2.5 29.5 12 Q28 6 21 6 Q14 6 12.7 12z" fill="#4a3526"/><path d="M16 13 h3 v1.2 h-3z M23 13 h3 v1.2 h-3z" fill="#3a3a4a"/><path d="M18 20.5 q3 2 6 0" stroke="#8a4a40" stroke-width="1.2" fill="none"/></svg><span class="nm">Student, Tutorial</span><span class="sb">AP10285 | Male</span></div>
  <div id="sbar"><div id="thumb"></div><span class="caret" style="left:1.5px;top:5px;border-style:solid;border-width:0 3.5px 3.5px 3.5px;border-color:transparent transparent #a9a9a9 transparent"></span><span class="caret" style="left:1.5px;top:203px;border-width:3.5px 3.5px 0 3.5px;border-top-color:#a9a9a9"></span></div>
  <div id="foot">SEE MORE RESULTS</div>
 </div>
</div>
</body></html>
